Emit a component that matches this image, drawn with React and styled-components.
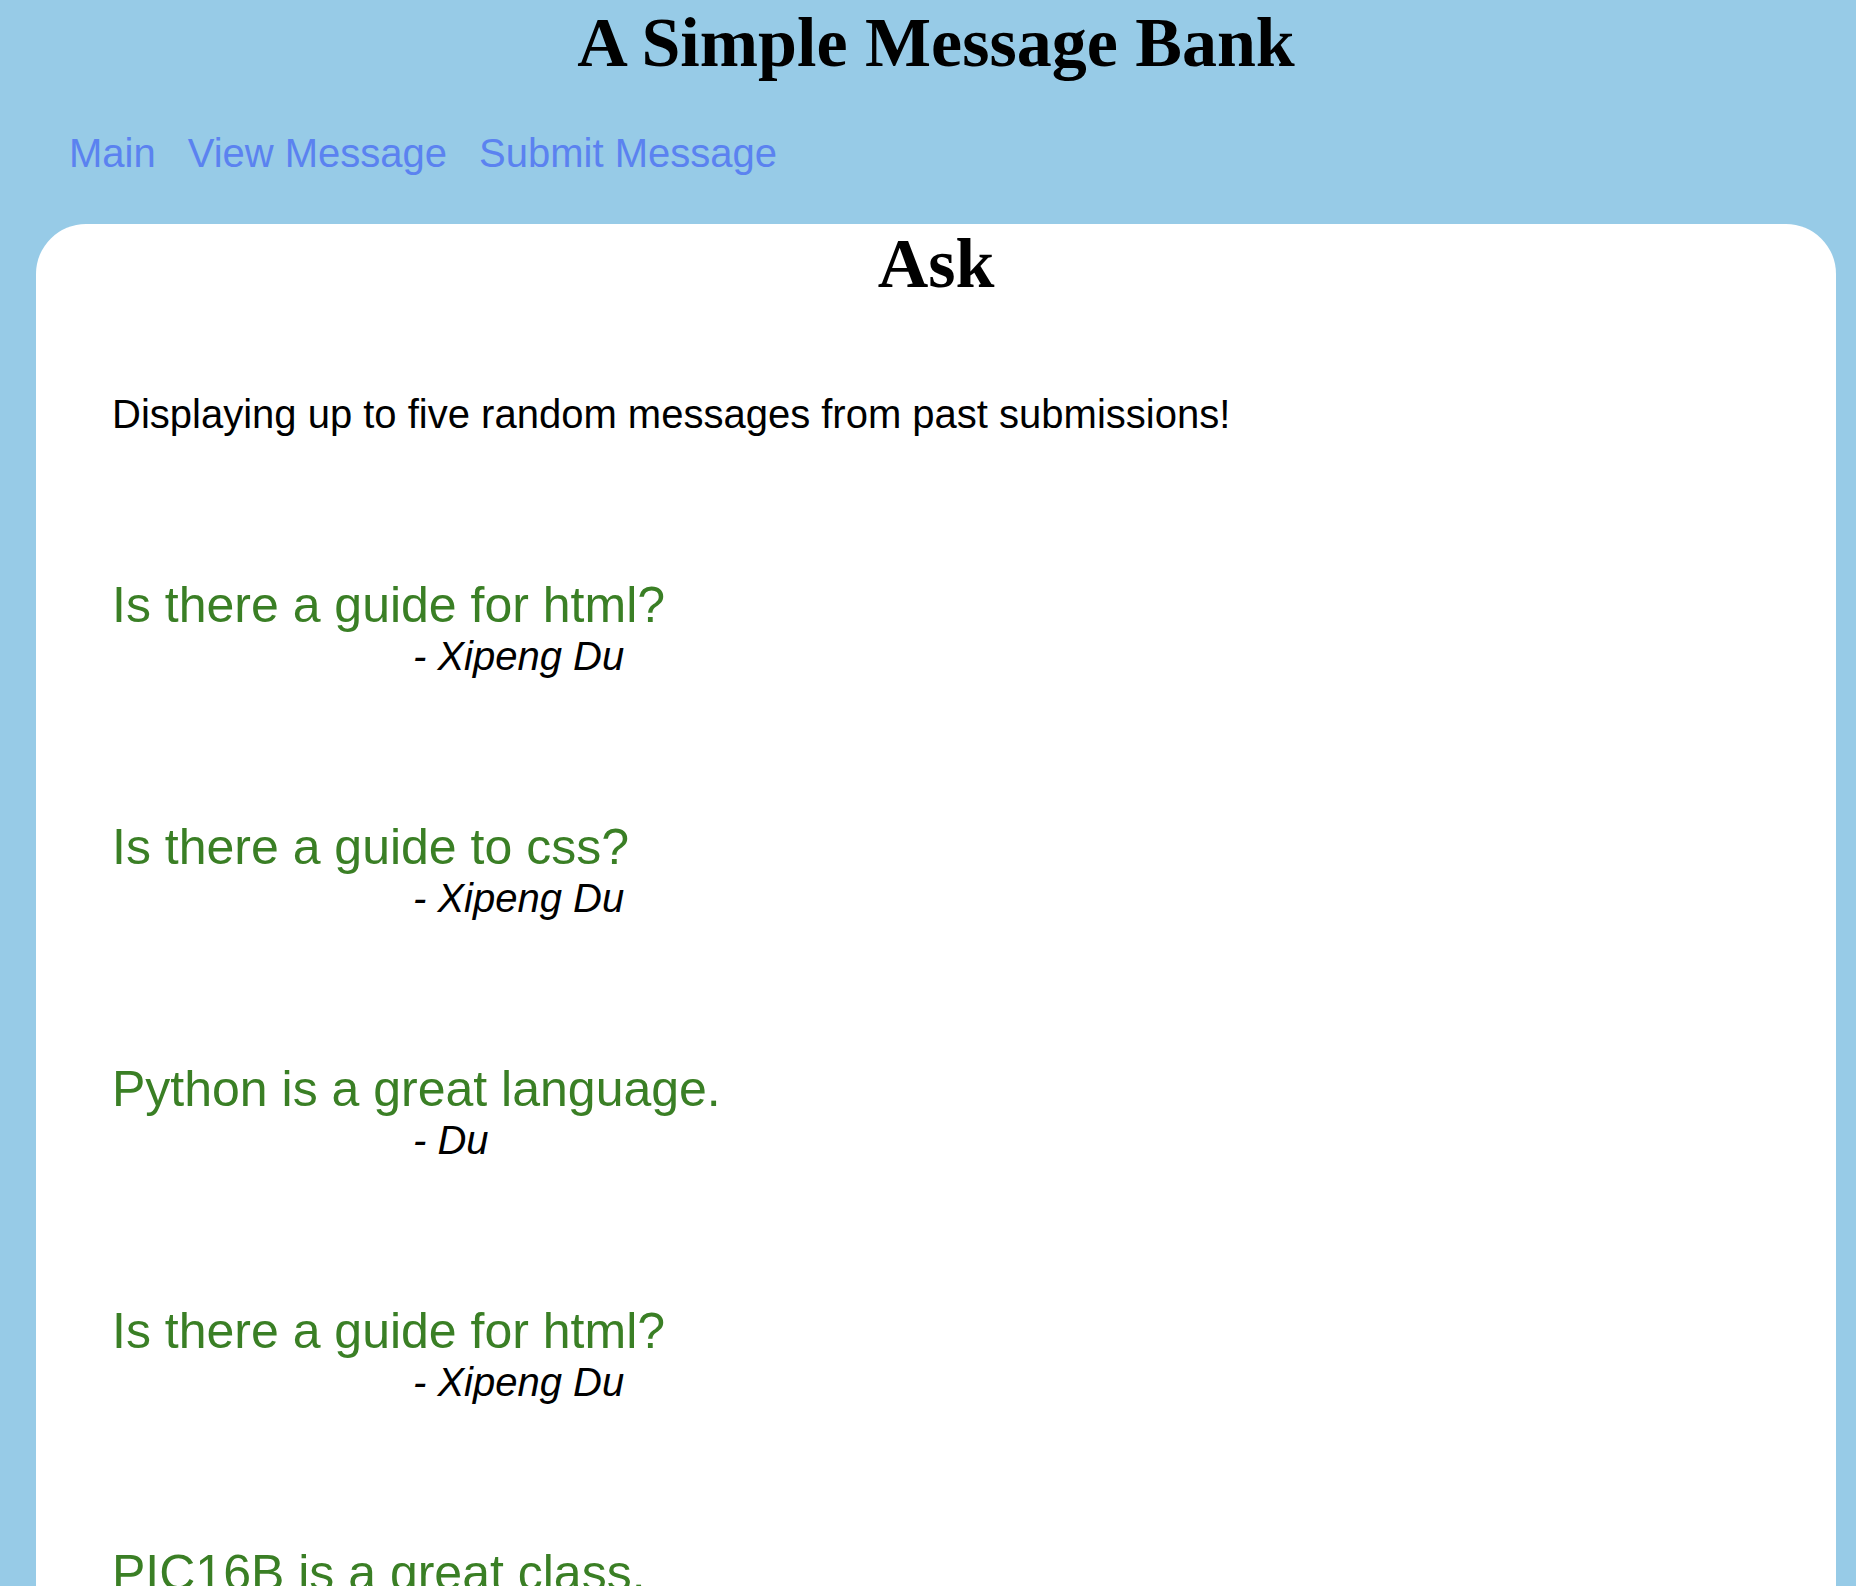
import React from "react";
import styled, { createGlobalStyle } from "styled-components";

const Global = createGlobalStyle`
  html, body {
    margin: 0;
    padding: 0;
    background: #97cbe7;
  }
  body {
    font-family: "Liberation Sans", Arial, Helvetica, sans-serif;
  }
`;

const Page = styled.div`
  padding: 0 20px 0 36px;
`;

const Title = styled.h1`
  margin: 3px 0 0;
  font-family: "Liberation Serif", "Times New Roman", serif;
  font-weight: 700;
  font-size: 70px;
  line-height: 80px;
  text-align: center;
  color: #000;
`;

const Nav = styled.nav`
  display: flex;
  gap: 32px;
  margin-top: 46px;
  padding-left: 33px;
`;

const NavLink = styled.a`
  font-size: 40px;
  line-height: 48px;
  color: #5b82f0;
  text-decoration: none;
  cursor: pointer;
`;

const Card = styled.main`
  margin-top: 47px;
  background: #fff;
  border-radius: 50px 50px 0 0;
  padding: 0 76px 200px;
  min-height: 1400px;
`;

const CardTitle = styled.h2`
  margin: 0;
  font-family: "Liberation Serif", "Times New Roman", serif;
  font-weight: 700;
  font-size: 70px;
  line-height: 80px;
  text-align: center;
  color: #000;
`;

const Intro = styled.p`
  margin: 86px 0 0;
  font-size: 40px;
  line-height: 48px;
  color: #000;
`;

const MessageList = styled.ul`
  list-style: none;
  margin: 139px 0 0;
  padding: 0;
  display: flex;
  flex-direction: column;
  gap: 140px;
`;

const Message = styled.li`
  display: flex;
  flex-direction: column;
`;

const MessageText = styled.span`
  font-size: 50px;
  line-height: 56px;
  color: #3a7f25;
`;

const Author = styled.span`
  font-size: 40px;
  line-height: 46px;
  font-style: italic;
  color: #000;
  padding-left: 301px;
`;

const messages = [
  { text: "Is there a guide for html?", author: "Xipeng Du" },
  { text: "Is there a guide to css?", author: "Xipeng Du" },
  { text: "Python is a great language.", author: "Du" },
  { text: "Is there a guide for html?", author: "Xipeng Du" },
  { text: "PIC16B is a great class.", author: "Xipeng Du" },
];

export default function App() {
  return (
    <>
      <Global />
      <Page>
        <Title>A Simple Message Bank</Title>
        <Nav>
          <NavLink>Main</NavLink>
          <NavLink>View Message</NavLink>
          <NavLink>Submit Message</NavLink>
        </Nav>
        <Card>
          <CardTitle>Ask</CardTitle>
          <Intro>Displaying up to five random messages from past submissions!</Intro>
          <MessageList>
            {messages.map((m, i) => (
              <Message key={i}>
                <MessageText>{m.text}</MessageText>
                <Author>- {m.author}</Author>
              </Message>
            ))}
          </MessageList>
        </Card>
      </Page>
    </>
  );
}
